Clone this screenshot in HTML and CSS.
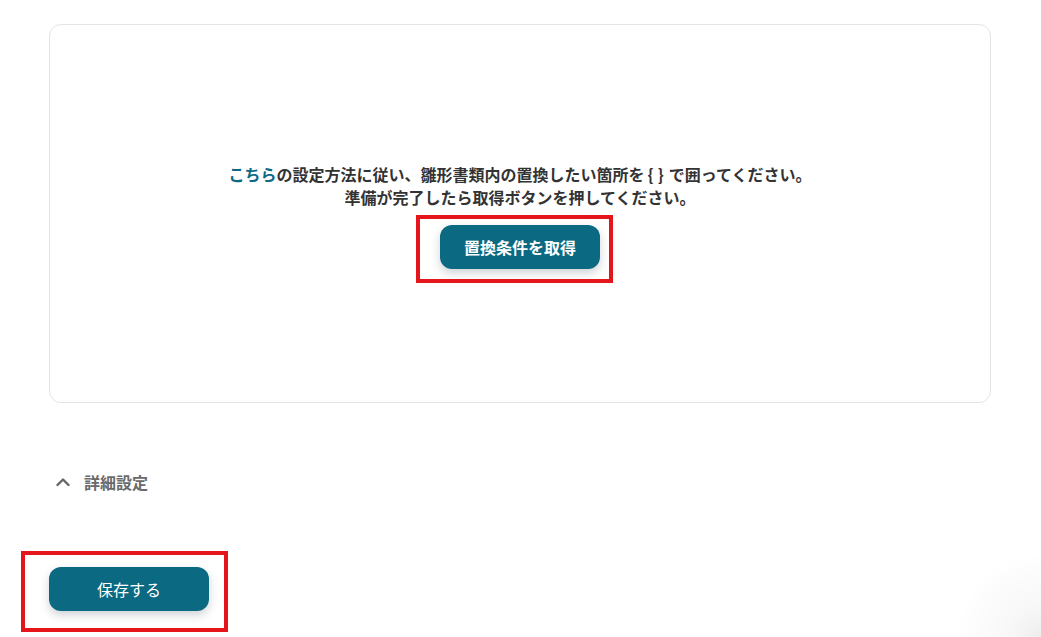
FILE: index.html
```html
<!DOCTYPE html>
<html lang="ja">
<head>
<meta charset="utf-8">
<link rel="stylesheet" href="styles.css">
</head>
<body>
<main class="page">
  <section class="card">
    <p class="desc"><a class="link" href="#">こちら</a>の設定方法に従い、雛形書類内の置換したい箇所を<span class="brace">{}</span>で囲ってください。<br>準備が完了したら取得ボタンを押してください。</p>
    <button class="btn btn-bold" type="button">置換条件を取得</button>
  </section>
  <div class="details">
    <svg class="chev" width="14" height="10" viewBox="0 0 14 10"><path d="M1.5 8 L7 2.5 L12.5 8" fill="none" stroke="#666" stroke-width="2.4" stroke-linecap="round" stroke-linejoin="round"/></svg>
    <span class="details-label">詳細設定</span>
  </div>
  <div class="actions">
    <button class="btn btn-save" type="button">保存する</button>
  </div>
</main>
<div class="mark mark-1"></div>
<div class="mark mark-2"></div>
<div class="corner-glow"></div>
</body>
</html>
```
FILE: styles.css
```css
html, body {
  margin: 0;
  padding: 0;
  background: #ffffff;
}
body {
  position: relative;
  width: 1041px;
  height: 637px;
  overflow: hidden;
  font-family: "Noto Sans CJK JP", "Noto Sans", sans-serif;
  color: #333333;
}
.page {
  padding: 24px 50px 0 49px;
}
.card {
  box-sizing: border-box;
  height: 379px;
  border: 1px solid #e4e4e4;
  border-radius: 12px;
  display: flex;
  flex-direction: column;
  align-items: center;
  justify-content: center;
  padding-top: 4px;
}
.desc {
  margin: 0;
  font-size: 16px;
  line-height: 23px;
  font-weight: 700;
  color: #333333;
  text-align: center;
}
.brace {
  padding: 0 1px 0 3px;
  letter-spacing: 4px;
}
.link {
  color: #0c6a84;
  text-decoration: none;
}
.btn {
  width: 160px;
  height: 44px;
  border: none;
  border-radius: 12px;
  background: #0b6982;
  color: #ffffff;
  font-family: "Noto Sans CJK JP", "Noto Sans", sans-serif;
  font-size: 16px;
  box-shadow: 0 4px 10px rgba(30, 50, 70, 0.22);
  padding: 0;
}
.btn-bold {
  margin-top: 16px;
  font-weight: 700;
}
.btn-save {
  font-weight: 400;
}
.details {
  margin-top: 67px;
  height: 24px;
  display: flex;
  align-items: center;
  padding-left: 7px;
  gap: 14px;
}
.details-label {
  font-size: 16px;
  font-weight: 700;
  color: #6a6a6a;
}
.actions {
  margin-top: 73px;
}
.mark {
  position: absolute;
  border: 4px solid #e4161b;
  box-sizing: border-box;
}
.mark-1 {
  left: 416px;
  top: 215px;
  width: 197px;
  height: 68px;
}
.mark-2 {
  left: 21px;
  top: 551px;
  width: 207px;
  height: 81px;
}
.corner-glow {
  position: absolute;
  right: 0;
  bottom: 0;
  width: 90px;
  height: 90px;
  background: radial-gradient(circle at 100% 100%, rgba(0, 0, 0, 0.07) 0, rgba(0, 0, 0, 0.03) 30px, rgba(0, 0, 0, 0) 85px);
}
```
